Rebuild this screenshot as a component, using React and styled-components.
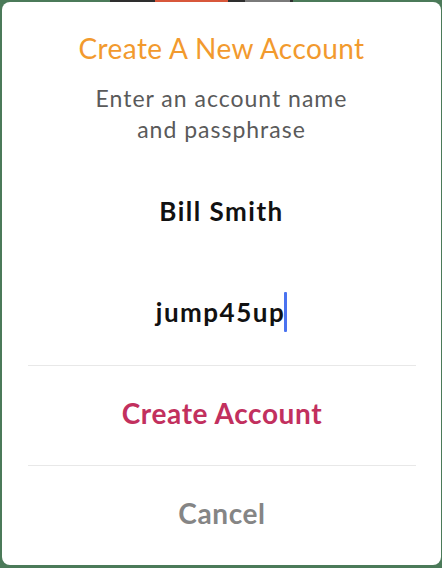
import React from 'react'
import styled, { createGlobalStyle } from 'styled-components'

const GlobalStyle = createGlobalStyle`
  html, body {
    margin: 0;
    padding: 0;
  }
  body {
    background:
      linear-gradient(
        to right,
        transparent 0 110px,
        #2e2e2e 110px 155px,
        #d8573b 155px 228px,
        #2e2e2e 228px 245px,
        #7a7a7a 245px 290px,
        #2e2e2e 290px 293px,
        transparent 293px
      ) top left / 100% 2px no-repeat,
      #4b7a59;
    font-family: Lato, "Open Sans", sans-serif;
    -webkit-font-smoothing: antialiased;
  }
`

const Sheet = styled.div`
  margin: 2px 1px 0 2px;
  height: 563px;
  background: #fff;
  border-radius: 8px;
  display: flex;
  flex-direction: column;
  overflow: hidden;
`

const Form = styled.div`
  flex: 1;
  display: flex;
  flex-direction: column;
  align-items: center;
  padding-top: 29px;
  text-align: center;
`

const Title = styled.h1`
  margin: 0;
  font-size: 28px;
  line-height: 34px;
  font-weight: 400;
  letter-spacing: 0.4px;
  color: #f29a2e;
`

const Hint = styled.p`
  margin: 18px 0 0;
  font-size: 23px;
  line-height: 31px;
  letter-spacing: 1px;
  color: #5a5a5a;
`

const Field = styled.div`
  margin-top: ${p => p.$gap}px;
  font-size: 26px;
  line-height: ${p => p.$line}px;
  font-weight: 700;
  letter-spacing: 1.5px;
  color: #111;
  display: flex;
  align-items: center;
`

const Caret = styled.span`
  display: inline-block;
  width: 3px;
  height: 40px;
  margin-left: -1px;
  background: #4a73f0;
  border-radius: 1px;
`

const Action = styled.button`
  all: unset;
  box-sizing: border-box;
  margin: 0 25px 0 26px;
  height: 100px;
  padding-bottom: ${p => p.$lift}px;
  border-top: 1px solid #e8e8e8;
  display: flex;
  align-items: center;
  justify-content: center;
  font-family: Lato, "Open Sans", sans-serif;
  font-size: 28px;
  font-weight: 700;
  letter-spacing: 0.6px;
  color: ${p => p.$color};
  cursor: pointer;
`

export default function App() {
  return (
    <>
      <GlobalStyle />
      <Sheet>
        <Form>
          <Title>Create A New Account</Title>
          <Hint>
            Enter an account name
            <br />
            and passphrase
          </Hint>
          <Field $gap={51} $line={30}>Bill Smith</Field>
          <Field $gap={66} $line={40}>
            jump45up
            <Caret />
          </Field>
        </Form>
        <Action $color="#c2305e" $lift={6}>Create Account</Action>
        <Action $color="#858585" $lift={5}>Cancel</Action>
      </Sheet>
    </>
  )
}
